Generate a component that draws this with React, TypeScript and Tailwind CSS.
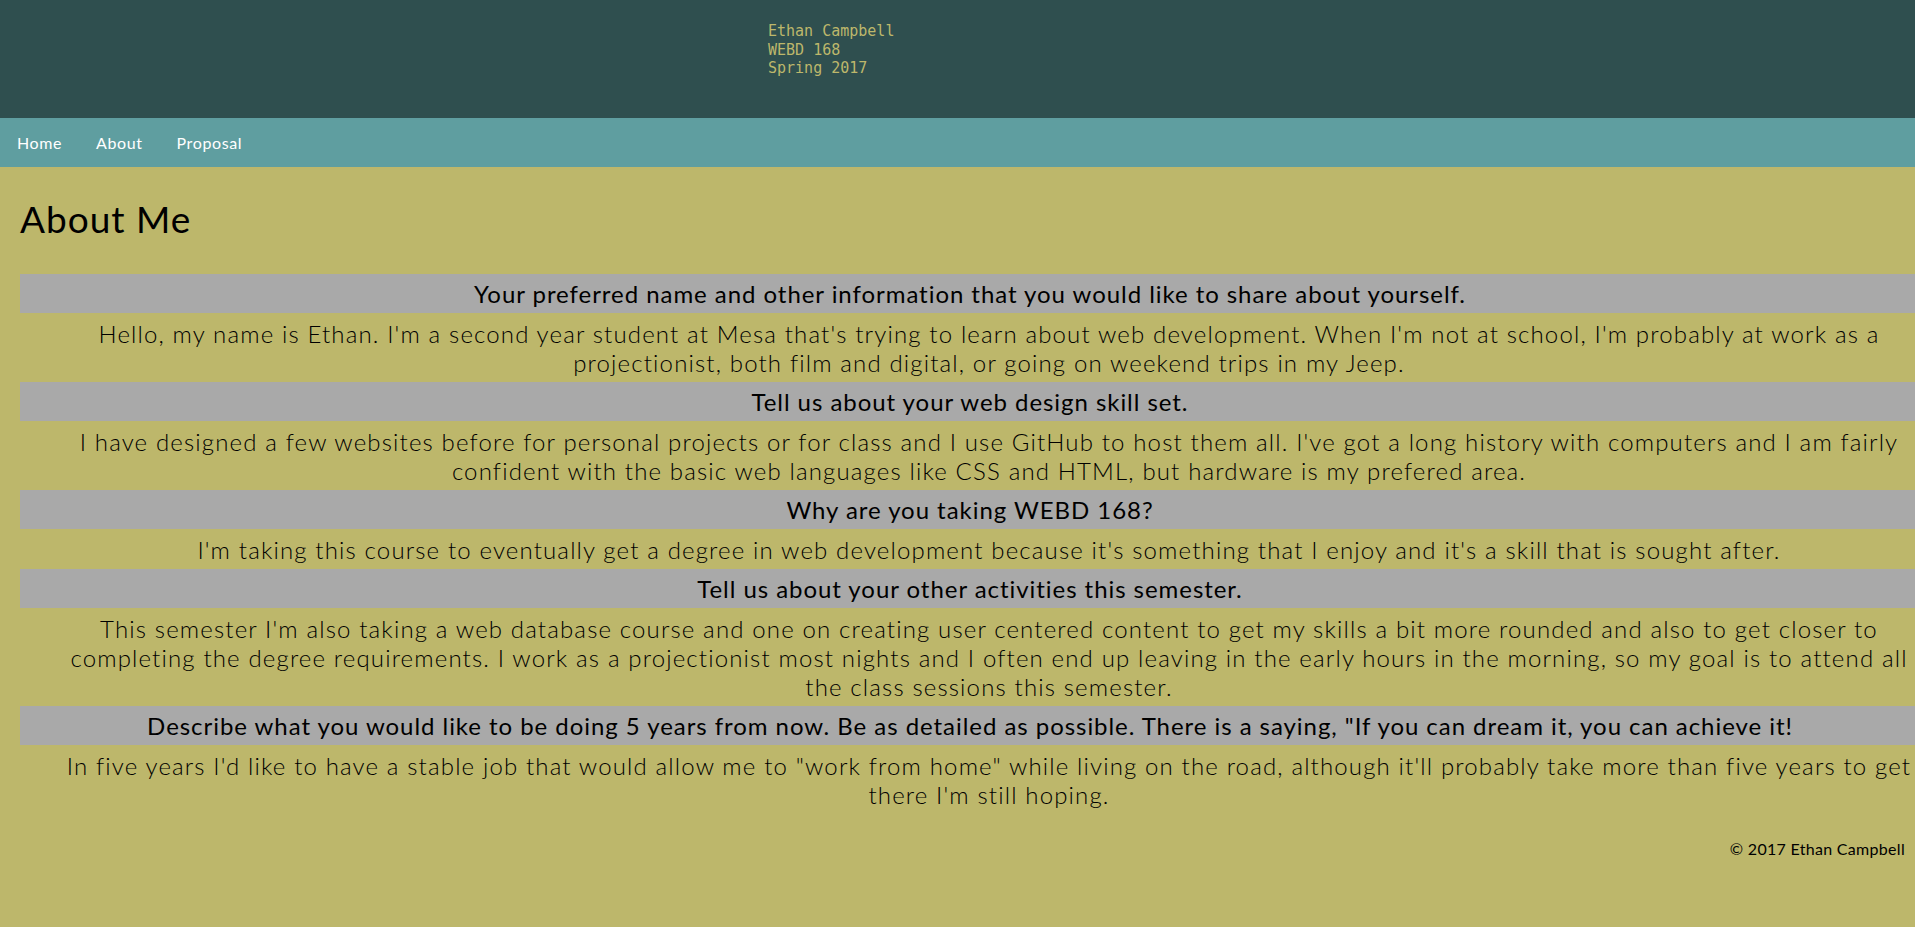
import React from 'react'

interface Section {
  question: string
  answer: string[]
}

const sections: Section[] = [
  {
    question: 'Your preferred name and other information that you would like to share about yourself.',
    answer: [
      "Hello, my name is Ethan. I'm a second year student at Mesa that's trying to learn about web development. When I'm not at school, I'm probably at work as a",
      'projectionist, both film and digital, or going on weekend trips in my Jeep.',
    ],
  },
  {
    question: 'Tell us about your web design skill set.',
    answer: [
      "I have designed a few websites before for personal projects or for class and I use GitHub to host them all. I've got a long history with computers and I am fairly",
      'confident with the basic web languages like CSS and HTML, but hardware is my prefered area.',
    ],
  },
  {
    question: 'Why are you taking WEBD 168?',
    answer: [
      "I'm taking this course to eventually get a degree in web development because it's something that I enjoy and it's a skill that is sought after.",
    ],
  },
  {
    question: 'Tell us about your other activities this semester.',
    answer: [
      "This semester I'm also taking a web database course and one on creating user centered content to get my skills a bit more rounded and also to get closer to",
      'completing the degree requirements. I work as a projectionist most nights and I often end up leaving in the early hours in the morning, so my goal is to attend all',
      'the class sessions this semester.',
    ],
  },
  {
    question:
      'Describe what you would like to be doing 5 years from now. Be as detailed as possible. There is a saying, "If you can dream it, you can achieve it!',
    answer: [
      'In five years I\'d like to have a stable job that would allow me to "work from home" while living on the road, although it\'ll probably take more than five years to get',
      "there I'm still hoping.",
    ],
  },
]

const navLinks = ['Home', 'About', 'Proposal']

export default function App() {
  return (
    <div className="min-h-screen bg-[#bdb76b] font-['Lato','Open_Sans',sans-serif] text-black">
      {/* Header */}
      <header className="h-[118px] bg-[#2f4f4f] pl-[768px] pt-[22px] font-['DejaVu_Sans_Mono',monospace] text-[15px] leading-[18.5px] text-[#bdb76b]">
        <div>Ethan Campbell</div>
        <div>WEBD 168</div>
        <div>Spring 2017</div>
      </header>

      {/* Nav */}
      <nav className="flex h-[49px] items-center bg-[#5f9ea0]">
        {navLinks.map((link) => (
          <a key={link} href="#" className="px-[17px] text-[16px] tracking-[0.6px] text-white">
            {link}
          </a>
        ))}
      </nav>

      <main className="pl-[20px]">
        <h1 className="mt-[30px] mb-[34px] text-[37px] leading-[43px] font-normal tracking-[1px]">About Me</h1>

        {sections.map((section) => (
          <section key={section.question}>
            <h2 className="bg-[#a9a9a9] py-[5px] pl-[5px] text-center text-[24px] leading-[29px] font-normal tracking-[0.95px]">
              {section.question}
            </h2>
            <p className="pt-[6px] pb-[5px] pl-[43px] text-center text-[24px] leading-[29px] font-light tracking-[1.15px]">
              {section.answer.map((line) => (
                <span key={line} className="block">
                  {line}
                </span>
              ))}
            </p>
          </section>
        ))}
      </main>

      <footer className="mt-[23px] pr-[10px] text-right text-[16px] tracking-[0.3px]">© 2017 Ethan Campbell</footer>
    </div>
  )
}
